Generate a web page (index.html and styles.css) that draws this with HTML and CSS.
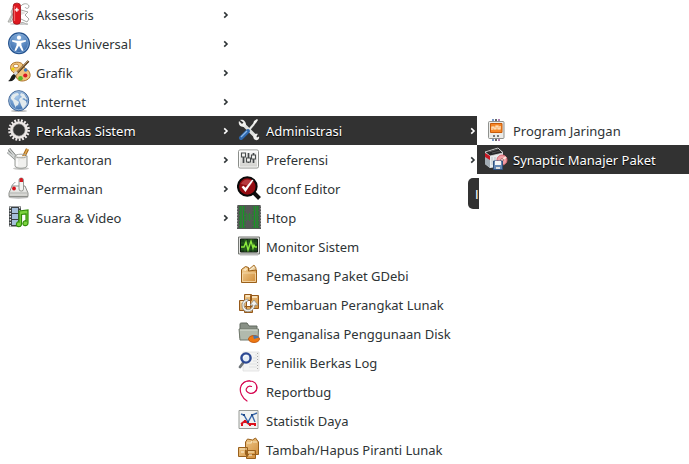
FILE: index.html
```html
<!DOCTYPE html>
<html lang="id">
<head>
<meta charset="utf-8">
<meta name="viewport" content="width=device-width, initial-scale=1">
<title>Menu Aplikasi</title>
<link rel="stylesheet" href="styles.css">
</head>
<body>
<svg class="defs" aria-hidden="true">
  <defs>
    <linearGradient id="box" x1="0" y1="0" x2="1" y2="1"><stop offset="0" stop-color="#f5d49a"/><stop offset="1" stop-color="#cf8a35"/></linearGradient>
    <linearGradient id="plate" x1="0" y1="0" x2="0" y2="1"><stop offset="0" stop-color="#fafafa"/><stop offset="1" stop-color="#cfcfcb"/></linearGradient>
    <radialGradient id="blue" cx=".5" cy=".25" r=".8"><stop offset="0" stop-color="#86afdc"/><stop offset="1" stop-color="#2f62a5"/></radialGradient>
    <radialGradient id="globe" cx=".4" cy=".3" r=".8"><stop offset="0" stop-color="#a9caec"/><stop offset="1" stop-color="#2c62a5"/></radialGradient>
    <symbol id="arrow" viewBox="0 0 6 8"><path d="M1.2 1.3 4 4 1.2 6.7" fill="none" stroke="currentColor" stroke-width="1.6"/></symbol>
  </defs>
</svg>
<nav class="menus" aria-label="Menu Aplikasi">
  <ul class="menu">
    <li><button class="item" type="button">
      <svg class="icon" viewBox="0 0 24 24"><ellipse cx="12" cy="22" rx="9" ry="1" fill="#ccc"/><path d="m6 6-2 4 1 2-4 8h3l3-5M3 19l4-10" fill="#e3e4e1" stroke="#979995" stroke-width=".8"/><path d="M14 4c2-3 7-3 8 0 0 3-3 3-4 1m-4 3 7 2-3 3 4 4-2 3-6-3m0 4c3-2 4 2 7 1" fill="none" stroke="#a5a7a3" stroke-width="1"/><path d="m14 9 5 2-5 2z" fill="#e0e1de"/><rect x="6.2" y="1.2" width="7.300" height="21" rx="3" fill="#df1820" stroke="#9b0f14" stroke-width=".8"/><path d="M7.6 4v15" stroke="#f56a6a"/><path d="M9.800 5.800v4M7.800 7.800h4" stroke="#fff" stroke-width="1.300"/></svg>
      <span class="label">Aksesoris</span><svg class="arrow"><use href="#arrow"/></svg></button></li>
    <li><button class="item" type="button">
      <svg class="icon" viewBox="0 0 24 24"><circle cx="12" cy="12.3" r="10.4" fill="url(#blue)" stroke="#23518d" stroke-width="1.1"/><circle cx="12" cy="12.3" r="9.3" fill="none" stroke="#83a9d6" stroke-width=".8"/><circle cx="12" cy="6.7" r="2.1" fill="#fff"/><path d="m5.3 9 5 .8h3.4l5-.8.3 1.500-4.600 1.400v2.400l2.200 5.200-1.600.6-3-5.400-3 5.400-1.600-.6 2.200-5.200v-2.400L5 10.500z" fill="#fff"/></svg>
      <span class="label">Akses Universal</span><svg class="arrow"><use href="#arrow"/></svg></button></li>
    <li><button class="item" type="button">
      <svg class="icon" viewBox="0 0 24 24"><path d="M5 4c3-3 10-2 11 1 1 4 6 4 7 9 1 4-3 7-8 7-6 0-5-5-8-8C4 11 2 7 5 4z" fill="#efc27c" stroke="#a7691c" stroke-width=".9"/><ellipse cx="9" cy="6" rx="2.6" ry="1.8" fill="#fff" stroke="#b67a2d" stroke-width=".8"/><circle cx="6" cy="9" r="1.5" fill="#edd400"/><circle cx="18.6" cy="10" r="1.8" fill="#3d79bd"/><circle cx="18.3" cy="15.500" r="2.100" fill="#d91923"/><circle cx="13.500" cy="18.300" r="2.300" fill="#58b928"/><path d="M21.500 1 8 15" stroke="#563512" stroke-width="2.400"/><path d="M21 1 9 13.500" stroke="#c1a373" stroke-width="1"/><path d="m10 12-3 3" stroke="#d8d8d8" stroke-width="3"/><path d="m7 14 2 2c-1 4-4 6-8 5 3-1 2-5 6-7z" fill="#191b1b"/></svg>
      <span class="label">Grafik</span><svg class="arrow"><use href="#arrow"/></svg></button></li>
    <li><button class="item" type="button">
      <svg class="icon" viewBox="0 0 24 24"><ellipse cx="12" cy="22" rx="8" ry="1" fill="#bbb"/><circle cx="11.700" cy="11.700" r="10" fill="url(#globe)" stroke="#365e91"/><path d="M4 8c1-3 4-4 7-4l1 2-3 1-2 3 2 1 3 2-1 3-2 1v2l-2-4-1-3-2-2zM14 4l3 1 3 5-1 1-2-2-2 1 4 2 1 3-4 5-2-4-1-3-1-2 1-2 2-1-2-2z" fill="#e3ebee"/><circle cx="11.700" cy="11.700" r="9.100" fill="none" stroke="#b4cce5" stroke-width=".7"/></svg>
      <span class="label">Internet</span><svg class="arrow"><use href="#arrow"/></svg></button></li>
    <li><button class="item selected" type="button" aria-expanded="true">
      <svg class="icon" viewBox="0 0 24 24"><circle cx="12" cy="12" r="9.600" fill="none" stroke="#f2eded" stroke-width="2.600" stroke-dasharray="1.800 1.550"/><circle cx="12" cy="12" r="7.500" fill="none" stroke="#ece7e5" stroke-width="2.700"/><circle cx="12" cy="12" r="6" fill="none" stroke="#aaa" stroke-width=".6"/></svg>
      <span class="label">Perkakas Sistem</span><svg class="arrow"><use href="#arrow"/></svg></button></li>
    <li><button class="item" type="button">
      <svg class="icon" viewBox="0 0 24 24"><ellipse cx="14" cy="21.500" rx="8" ry="1.500" fill="#c7c7c5"/><path d="m2 2 10 12M1 5l9 8" stroke="#6e7270" stroke-width="3"/><path d="m2 2 10 12M1 5l9 8" stroke="#d3d6d5" stroke-width="1.700"/><path d="m20.500 2-5 10" stroke="#a36517" stroke-width="3.300"/><path d="m20.500 2-5 10" stroke="#e4ad54" stroke-width="1.600"/><path d="M8 9v10c1 3 11 3 12 0V9" fill="#eeeeec" fill-opacity=".9" stroke="#999c98"/><ellipse cx="14" cy="9" rx="6" ry="1.800" fill="none" stroke="#a4a6a2"/><path d="M10 12v7" stroke="#fff" stroke-width="1.500"/></svg>
      <span class="label">Perkantoran</span><svg class="arrow"><use href="#arrow"/></svg></button></li>
    <li><button class="item" type="button">
      <svg class="icon" viewBox="0 0 24 24"><ellipse cx="11.500" cy="21.500" rx="10" ry="1.200" fill="#bbb"/><path d="M6 12c-3-4 2-4 2-6" fill="none" stroke="#888"/><path d="M5 10h13l3 7v3.500H2V17z" fill="url(#plate)" stroke="#8b8d89"/><path d="M2 17h19" stroke="#b1b3af"/><rect x="12" y="2" width="4.500" height="13" rx="2" fill="#f2f2f0" stroke="#8b8d89" stroke-width=".9"/><path d="M12.500 6V3.500c0-2 3.500-2 3.500 0V6z" fill="#d61a22"/><circle cx="7" cy="12.500" r="1.900" fill="#d40f18"/></svg>
      <span class="label">Permainan</span><svg class="arrow"><use href="#arrow"/></svg></button></li>
    <li><button class="item" type="button">
      <svg class="icon" viewBox="0 0 24 24"><rect x="2" y="1.500" width="12" height="20" fill="#3c4144"/><path d="M5 3h6v5H5zm0 6h6v5H5zm0 6h6v5H5z" fill="#a6bfdb"/><path d="M3.300 2v20M12.700 2v20" stroke="#f0f0ee" stroke-width="1.300" stroke-dasharray="1.500"/><path d="m12 6 9-1v13c0 4-6 3-5 0 .5-2 2-2.500 3-2v-7l-4.500.5V19c0 4-6 3-5 0 .4-2 1.500-2.500 2.500-2z" fill="#7bd33e" stroke="#318c0a" stroke-width="1.200"/></svg>
      <span class="label">Suara &amp; Video</span><svg class="arrow"><use href="#arrow"/></svg></button></li>
  </ul>

  <ul class="menu submenu">
    <li><button class="item selected" type="button" aria-expanded="true">
      <svg class="icon" viewBox="0 0 24 24"><path d="m7 7 12 12" stroke="#dfe1df" stroke-width="3.400"/><path d="M3 2c3-1 6 1 6 5L7 9C3 9 1 6 2 3l3 3 1.500-1.500z" fill="#f0f0ee"/><path d="M17 21c-2-3 1-6 4-5l-2 2 1 1.500 2-1c1 3-3 5-5 2.500z" fill="#f0f0ee"/><path d="m11 13 6-7" stroke="#e8eae8" stroke-width="2"/><path d="m16 6 1-3 3-2 1 1-2 3-2 2z" fill="#f4f4f2"/><path d="m4 20 7-7" stroke="#2e68ae" stroke-width="4" stroke-linecap="round"/><path d="m4 19 6-6" stroke="#8ab7e8" stroke-width="1.200"/></svg>
      <span class="label">Administrasi</span><svg class="arrow"><use href="#arrow"/></svg></button></li>
    <li><button class="item" type="button">
      <svg class="icon" viewBox="0 0 24 24"><rect x="1.500" y="3" width="20" height="18" rx="1.500" fill="url(#plate)" stroke="#8b8e8a"/><path d="M2.500 4h18v16h-18z" fill="none" stroke="#fff" stroke-width=".8"/><path d="M6.500 6v10M11.500 6v10M16.500 6v10" stroke="#44484a" stroke-width="1.700"/><path d="M4.500 6h4v4h-4zM9.500 11h4v4h-4zM14.500 8h4v4h-4z" fill="#f4f4f2" stroke="#484c4d" stroke-width="1.100"/></svg>
      <span class="label">Preferensi</span><svg class="arrow"><use href="#arrow"/></svg></button></li>
    <li><button class="item" type="button">
      <svg class="icon" viewBox="0 0 24 24"><path d="m17 17 5.500 5.500" stroke="#111" stroke-width="4"/><circle cx="10.300" cy="10.500" r="9.300" fill="#930d12" stroke="#090909" stroke-width="2.100"/><path d="M4 8c2-5 8-6 12-2l-3 4" fill="#c65054" opacity=".7"/><path d="m4.500 11 4 5 8-12-1.500-.3-6.500 8-2-2z" fill="#fff"/></svg>
      <span class="label">dconf Editor</span></button></li>
    <li><button class="item" type="button">
      <svg class="icon" viewBox="0 0 24 24"><path d="M0 0h24v24H0z" fill="#555856"/><path d="M.5 0v24M23.500 0v24" stroke="#999" stroke-dasharray="1.500"/><path d="M4 1v22M6.500 1v22M17.500 1v22M20 1v22" stroke="#159b22" stroke-width="1.200"/><path d="M2.500 1v22M8 1v22M16 1v22M21.500 1v22" stroke="#30703a" stroke-dasharray="4 1"/><path d="M9.500 8v8M11 9v6M12.500 8v8M14 9v6" stroke="#268b2e" stroke-width=".8"/></svg>
      <span class="label">Htop</span></button></li>
    <li><button class="item" type="button">
      <svg class="icon" viewBox="0 0 24 24"><path d="M1.500 3h21v17h-21z" fill="#e0e1de" stroke="#747773"/><path d="M3.500 5h17v13h-17z" fill="#184317" stroke="#111b11"/><path d="M4 9h16M4 12h16M4 15h16M8 5v13M12 5v13M16 5v13" stroke="#39752a" stroke-width=".6"/><path d="M4 13h3l2-5 2 8 3-9 2 7 1-3 1 2h2" fill="none" stroke="#8ceb3d" stroke-width="1.400"/><path d="M3 21h18" stroke="#bbb"/></svg>
      <span class="label">Monitor Sistem</span></button></li>
    <li><button class="item" type="button">
      <svg class="icon" viewBox="0 0 24 24"><path d="m11 7 6-5 2 3v4h-8z" fill="#ead0a2" stroke="#a77029" stroke-width=".9"/><path d="m13 7 4-3" stroke="#fff3dc"/><path d="m4.500 6.500 4-3 3 1V8l8-1v12.500h-15z" fill="url(#box)" stroke="#9b601a"/><path d="M5.500 10h13v8.500h-13z" fill="none" stroke="#f6dcae" stroke-width=".8"/><path d="m6 7 3-2 1.500 1-2 2z" fill="#fbe8c5"/></svg>
      <span class="label">Pemasang Paket GDebi</span></button></li>
    <li><button class="item" type="button">
      <svg class="icon" viewBox="0 0 24 24"><path d="M7.500 2.500h7v6h-7zM13.500 3.500h8v13h-8zM2.500 8.500h7v10h-7zM7.500 14.500h8v6h-8z" fill="url(#box)" stroke="#96591a"/><path d="M15 5h5M4 10h4M9 4h4" stroke="#fff0d2" stroke-width="1.300"/><path d="M11 7C5 8 4 13 6 17c3 5 11 3 12-4h3l-4-5-4 5h3c-1 5-6 6-8 3-2-3-1-6 3-7z" fill="#f4f4f1" stroke="#8c8e8a" stroke-width=".8"/></svg>
      <span class="label">Pembaruan Perangkat Lunak</span></button></li>
    <li><button class="item" type="button">
      <svg class="icon" viewBox="0 0 24 24"><path d="M3 17V3c0-1 1-1 2-1h5l2 3h8v12z" fill="#899186" stroke="#61695e"/><path d="M2 8h19.500L21 19H3z" fill="#b1baad" stroke="#70786c"/><path d="M3 9h17.500" stroke="#d8ddd4"/><ellipse cx="17" cy="18" rx="5.500" ry="3.500" fill="#ee7913" stroke="#bb4b00" stroke-width=".8"/><path d="m17 18-1-3.500c3-.4 5 .4 6 2z" fill="#4378b6"/></svg>
      <span class="label">Penganalisa Penggunaan Disk</span></button></li>
    <li><button class="item" type="button">
      <svg class="icon" viewBox="0 0 24 24"><path d="M6 2h16v19H6z" fill="#f4f4f3" stroke="#dfdfdf" stroke-width=".8"/><path d="M18 5h2M16 8h4M16 11h4M12 14h8M12 17h8" stroke="#dde0e1"/><path d="M20.500 3v17" stroke="#aaa" stroke-dasharray="1 2"/><path d="m6 13-3 4" stroke="#6d7378" stroke-width="2.800" stroke-linecap="round"/><circle cx="9" cy="8" r="4.600" fill="#e4edf6" stroke="#2c4994" stroke-width="2.400"/><path d="M6.500 8c0-2 2-3 4-2" fill="none" stroke="#fff"/></svg>
      <span class="label">Penilik Berkas Log</span></button></li>
    <li><button class="item" type="button">
      <svg class="icon" viewBox="0 0 24 24"><path d="M10 22C5 19 2.500 13 3.500 8.500 4.500 4 9 1.500 13 1.800c4 .2 7 3 7 7s-4 6-7 5.500-4.500-2.800-3.500-4.800 3-2.700 5-2" fill="none" stroke="#d70a53" stroke-width="1.200" stroke-linecap="round"/><path d="M4 7c2-4 6-5.500 10-4.700M19.500 7c1 3-1 6-4 7" fill="none" stroke="#d70a53" stroke-width="1"/></svg>
      <span class="label">Reportbug</span></button></li>
    <li><button class="item" type="button">
      <svg class="icon" viewBox="0 0 24 24"><path d="M2 2.500h19v18H2z" fill="#f1f2f0" stroke="#979a96"/><path d="m4 6 3 1 4 7 4-7 5-2M15 7l3 7" fill="none" stroke="#3767aa" stroke-width="1.400"/><path d="m4 16 4-3 4 3h7" fill="none" stroke="#db1722" stroke-width="2"/><path d="M6 6h2v2H6zm4 7h2v2h-2zm4-7h2v2h-2z" fill="#204a87"/><path d="M4 15h2v3H4zm3-3h2v3H7zm5 3h2v3h-2zm5 0h2v3h-2z" fill="#df0e19"/></svg>
      <span class="label">Statistik Daya</span></button></li>
    <li><button class="item" type="button">
      <svg class="icon" viewBox="0 0 24 24"><path d="m8.500 5 2-3 5 1 3-2 3 4v12.500h-13zM1.500 10.500h9v9h-9zM9.500 13.500h9v8h-9z" fill="url(#box)" stroke="#99601c"/><path d="M10 6h4l1-2m1 1h4M3 12h6M11 15h6" fill="none" stroke="#f9e5bc" stroke-width="1.200"/><path d="M4 15h3M12 18h3" stroke="#fff5dc"/></svg>
      <span class="label">Tambah/Hapus Piranti Lunak</span></button></li>
  </ul>

  <div class="submenu last">
    <ul class="menu">
      <li><button class="item" type="button">
        <svg class="icon" viewBox="0 0 24 24"><path d="M9 1v3M9 20v3" stroke="#4b76b4" stroke-width="1.500"/><path d="M12 1v3M12 20v3" stroke="#333" stroke-width="1.500"/><path d="M15 1v3M15 20v3" stroke="#98599b" stroke-width="1.500"/><rect x="4.500" y="3.500" width="15.500" height="17" rx="1" fill="#ebebe8" stroke="#8f918e"/><path d="M6.500 5.500h11.500v9H6.500z" fill="#f48627" stroke="#c95b09"/><path d="M8 12V9h2v2h2V8h2v3h2V8" fill="none" stroke="#fff2d8" stroke-width="1.200"/><path d="M9 17h2v2H9zm4 0h2v2h-2z" fill="#777"/></svg>
        <span class="label">Program Jaringan</span></button></li>
      <li><button class="item selected" type="button">
        <svg class="icon" viewBox="0 0 24 24"><path d="m1 5 13-4 5 4v14L6 21l-5-4z" fill="#e7ebed"/><path d="m1 5 5 3v13l-5-4z" fill="#a3adb5"/><path d="m1 5 13-4 5 5-13 3z" fill="#252729" stroke="#ddd" stroke-width=".8"/><path d="M5 5 14 2M8 6l8-2" stroke="#666" stroke-width=".7"/><path d="M1 6v4l5 3V9z" fill="#c91823"/><path d="M8 10v8M11 10v6" stroke="#bac3ca"/><circle cx="18" cy="13" r="5" fill="#ef9da3" stroke="#d96b76"/><path d="m18 13 4-3M18 13l-4 3" stroke="#ffe4dc" stroke-width="2"/><circle cx="18" cy="13" r="1.400" fill="#fff" stroke="#a66"/><path d="M9.500 14h9v8.500h-9z" fill="#6688b3" stroke="#30517e"/><path d="M11 14h6v4h-6z" fill="#f5f5f5"/><path d="M12 20h4v2h-4z" fill="#ddd"/></svg>
        <span class="label">Synaptic Manajer Paket</span></button></li>
    </ul>
    <div class="tooltip" role="tooltip">I</div>
  </div>
</nav>
</body>
</html>
```
FILE: styles.css
```css
:root {
  --row: 29px;
  --dark: #323232;
}

* {
  box-sizing: border-box;
}

body {
  margin: 0;
  background: #fff;
  color: #2e3436;
  font-family: "Noto Sans", sans-serif;
  font-size: 13px;
}

.defs {
  position: absolute;
  width: 0;
  height: 0;
}

.menus {
  display: grid;
  grid-template-columns: 230fr 247fr 212fr;
  align-items: start;
}

.menu {
  margin: 0;
  padding: 0;
  list-style: none;
}

.submenu {
  margin-top: calc(4 * var(--row));
}

.last {
  position: relative;
}

.item {
  display: flex;
  align-items: flex-start;
  gap: 5px;
  width: 100%;
  height: var(--row);
  margin: 0;
  padding: 2px 1px 0 7px;
  border: 0;
  background: transparent;
  color: inherit;
  font: inherit;
  text-align: left;
}

.icon {
  flex: none;
  width: 24px;
  height: 24px;
}

.label {
  flex: 1;
  padding-top: 4px;
  line-height: 18px;
  white-space: nowrap;
}

.arrow {
  flex: none;
  width: 6px;
  height: 8px;
  margin-top: 9px;
}

.selected {
  background: var(--dark);
  color: #fff;
}

.selected .label {
  text-shadow: 0 1px 1px #000;
}

.tooltip {
  position: absolute;
  top: 62px;
  left: -9px;
  width: 11px;
  height: 31px;
  padding-left: 7px;
  overflow: hidden;
  border-radius: 5px 0 0 5px;
  background: var(--dark);
  color: #fff;
  font-family: "Liberation Sans", sans-serif;
  line-height: 33px;
}
```
